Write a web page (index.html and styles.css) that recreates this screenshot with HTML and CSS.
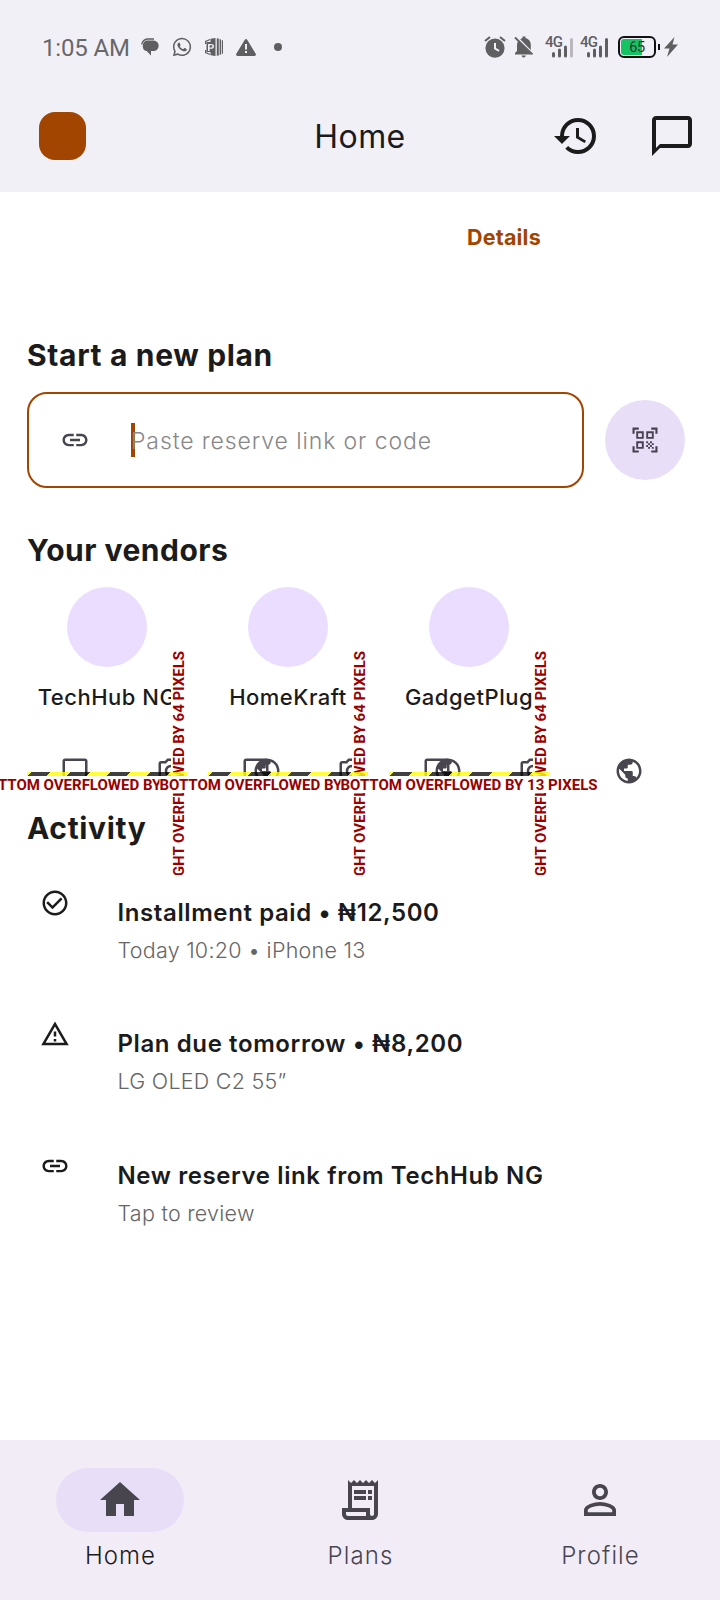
FILE: index.html
```html
<!DOCTYPE html>
<html lang="en">
<head>
<meta charset="utf-8">
<title>Home</title>
<link rel="stylesheet" href="styles.css">
</head>
<body>
<svg class="defs" width="0" height="0">
  <symbol id="link" viewBox="0 0 24 24"><path d="M3.9 12c0-1.71 1.39-3.1 3.1-3.1h4V7H7c-2.76 0-5 2.24-5 5s2.24 5 5 5h4v-1.9H7c-1.71 0-3.1-1.39-3.1-3.1zM8 13h8v-2H8v2zm9-6h-4v1.9h4c1.71 0 3.1 1.39 3.1 3.1s-1.39 3.1-3.1 3.1h-4V17h4c2.76 0 5-2.24 5-5s-2.24-5-5-5z"/></symbol>
  <symbol id="chat" viewBox="0 0 24 24"><path d="M20 2H4c-1.1 0-2 .9-2 2v18l4-4h14c1.1 0 2-.9 2-2V4c0-1.1-.9-2-2-2zm0 14H6l-2 2V4h16v12z"/></symbol>
  <symbol id="camera" viewBox="0 0 24 24"><path d="M14.12 4l1.83 2H20v12H4V6h4.05l1.83-2h4.24M15 2H9L7.17 4H4c-1.1 0-2 .9-2 2v12c0 1.1.9 2 2 2h16c1.1 0 2-.9 2-2V6c0-1.1-.9-2-2-2h-3.17L15 2zm-3 7c1.65 0 3 1.35 3 3s-1.35 3-3 3-3-1.35-3-3 1.35-3 3-3m0-2c-2.76 0-5 2.24-5 5s2.24 5 5 5 5-2.24 5-5-2.24-5-5-5z"/></symbol>
  <symbol id="globe" viewBox="0 0 24 24"><path d="M12 2C6.48 2 2 6.48 2 12s4.48 10 10 10 10-4.48 10-10S17.52 2 12 2zm-1 17.93c-3.95-.49-7-3.85-7-7.93 0-.62.08-1.21.21-1.79L9 15v1c0 1.1.9 2 2 2v1.93zm6.9-2.54c-.26-.81-1-1.39-1.9-1.39h-1v-3c0-.55-.45-1-1-1H8v-2h2c.55 0 1-.45 1-1V7h2c1.1 0 2-.9 2-2v-.41c2.93 1.19 5 4.06 5 7.41 0 2.08-.8 3.97-2.1 5.39z"/></symbol>
</svg>
<div class="screen">
  <header class="top">
    <div class="status">
      <span class="clock">1:05 AM</span>
      <svg class="s-msg" width="18" height="18" viewBox="0 0 18 18"><path d="M6.5 2.600H12.500a5.200 5.200 0 0 1 0 10.400H10v4.600L5.600 13C3 12.600 1.800 10.600 1.800 8.200 1.800 5 3.500 2.600 6.500 2.600z"/><path d="M.7 6.500Q1.800 1.300 6.500 1H13" fill="none" stroke="#5f5f61" stroke-width="1.300"/></svg>
      <svg class="s-wa" width="22" height="22" viewBox="0 0 24 24"><path d="M19.050 4.910A9.820 9.820 0 0 0 12.040 2c-5.460 0-9.910 4.450-9.910 9.910 0 1.750.460 3.450 1.320 4.950L2.050 22l5.250-1.380a9.900 9.900 0 0 0 4.740 1.210c5.460 0 9.910-4.450 9.910-9.910 0-2.650-1.030-5.140-2.900-7.010zm-7.010 15.240a8.200 8.200 0 0 1-4.190-1.150l-.3-.18-3.120.82.830-3.040-.2-.310a8.200 8.200 0 0 1-1.260-4.380c0-4.540 3.700-8.240 8.240-8.240 4.540 0 8.240 3.700 8.240 8.240s-3.700 8.240-8.240 8.240zm4.520-6.160c-.250-.120-1.470-.720-1.690-.810-.230-.080-.390-.120-.560.120-.170.250-.640.810-.780.970-.140.170-.290.190-.540.060-.250-.120-1.050-.390-1.990-1.230-.740-.660-1.230-1.470-1.380-1.720-.140-.250-.020-.380.110-.510.110-.110.250-.290.370-.430s.170-.250.250-.410c.080-.170.040-.310-.020-.430s-.560-1.340-.760-1.840c-.200-.480-.410-.420-.560-.430h-.480c-.170 0-.430.060-.660.310-.220.250-.860.850-.860 2.070s.890 2.400 1.010 2.560c.120.170 1.750 2.670 4.230 3.740 1.600.690 2.230.750 3.030.630.490-.070 1.470-.600 1.680-1.180s.210-1.070.140-1.180-.220-.160-.470-.280z"/></svg>
      <svg class="s-app" width="18" height="18" viewBox="0 0 18 18"><path d="M5.500.800L10.500 0v18l-5-.8V14H1.500V4h4zM3 6v7h1.600v-2.200h1C8 10.800 9 10 9 8.400S8 6 5.800 6zm1.600 1.300H6c1 0 1.400.3 1.400 1.100S7 9.500 6 9.500H4.600z" fill-rule="evenodd"/><path d="M5 1.500L.600 3.500V6M.600 12v2.500L5 16.500" fill="none" stroke="#5f5f61" stroke-width="1.200"/><path d="M11.800.200l2 .4v16.800l-2 .4zM14.600 1l1.400.400v15.200l-1.400.400zM16.800 2l1.200.600v12.800l-1.200.600z"/></svg>
      <svg class="s-warn" width="20" height="17" viewBox="0 0 20 17"><path d="M8.800.700q1.200-1.400 2.400 0l8.500 14q.8 2.300-1.700 2.300H2q-2.500 0-1.700-2.300zM9 5v5.500h2V5zm0 7v2h2v-2z" fill-rule="evenodd"/></svg>
      <i class="s-dot"></i>
      <span class="grow"></span>
      <svg class="s-alarm" width="22" height="22" viewBox="0 0 22 22"><path d="M11 2.500a9.600 9.600 0 1 0 0 19.200 9.600 9.600 0 0 0 0-19.200zm-1 4.500h2v5l3.500 2-1 1.800L10 13z" fill-rule="evenodd"/><path d="M1 5l5-4M21 5l-5-4" stroke="#5f5f61" stroke-width="2"/></svg>
      <svg class="s-bell" width="20" height="22" viewBox="0 0 20 22"><path d="M1 18.500v-1.600L3 15V9q0-2.500 1.300-4.200L17 17.800v.700zM6.200 3.300L8.500 2V.500h3V2C15 3 16.800 5.500 16.800 9v5zM7.500 19.500h4.400q-.4 2-2.200 2t-2.200-2z"/><path d="M1 1.500l17.500 16.800" stroke="#5f5f61" stroke-width="1.800"/></svg>
      <span class="signal"><b>4G</b><svg width="22" height="20" viewBox="0 0 22 20"><path d="M1.500 15.500v2.500M7.500 12v6M13.500 9v9"/><path class="weak" d="M19.500 1.500V18"/></svg></span>
      <span class="signal second"><b>4G</b><svg width="22" height="20" viewBox="0 0 22 20"><path d="M1.500 15.500v2.500M7.500 12v6M13.500 9v9M19.500 1.500V18"/></svg></span>
      <span class="battery"><span>65</span></span>
      <svg class="s-bolt" width="14" height="20" viewBox="0 0 14 20"><path d="M10.500 0L0 11.500h5.500L3 20 14 7.500H8.500z"/></svg>
    </div>
    <div class="appbar">
      <div class="avatar"></div>
      <h1>Home</h1>
      <div class="actions">
        <svg width="48" height="48" viewBox="0 0 24 24"><path d="M13 3a9 9 0 0 0-9 9H1l3.890 3.890.070.140L9 12H6c0-3.870 3.130-7 7-7s7 3.130 7 7-3.130 7-7 7c-1.930 0-3.680-.790-4.940-2.060l-1.420 1.420A8.954 8.954 0 0 0 13 21a9 9 0 0 0 0-18zm-1 5v5l4.280 2.540.720-1.210-3.500-2.080V8H12z"/></svg>
        <svg width="48" height="48"><use href="#chat"/></svg>
      </div>
    </div>
  </header>
  <main>
    <div class="details"><a>Details</a></div>
    <h2>Start a new plan</h2>
    <div class="search">
      <div class="field">
        <svg class="i30 muted"><use href="#link"/></svg>
        <span class="caret"></span><span class="hint">Paste reserve link or code</span>
      </div>
      <div class="scan">
        <svg class="i30" viewBox="0 0 24 24"><path d="M2 2h5v1.700H3.700V7H2zM17 2h5v5h-1.700V3.700H17zM2 17h1.700v3.300H7V22H2zM20.300 17H22v5h-5v-1.700h3.300z"/><path d="M5 5h6v6H5zm1.500 1.500v3h3v-3zM13 5h6v6h-6zm1.500 1.500v3h3v-3zM5 13h6v6H5zm1.500 1.500v3h3v-3z" fill-rule="evenodd"/><path d="M13 13h1.500v1.500H13zM16 13h1.500v1.500H16zM14.500 14.500H16V16h-1.500zM17.500 14.500H19V16h-1.500zM13 16h1.500v1.500H13zM16 16h1.500v1.500H16zM14.500 17.500H16V19h-1.500zM17.500 17.500H19V19h-1.500z"/></svg>
      </div>
    </div>
    <h2 class="h-vendors">Your vendors</h2>
    <section class="vendors">
      <article class="vendor">
        <div class="disc"></div><div class="name">TechHub NG</div>
        <div class="tools"><svg class="i30"><use href="#chat"/></svg><svg class="i30"><use href="#camera"/></svg><svg class="i30"><use href="#globe"/></svg></div>
        <div class="over-right"><span>RIGHT OVERFLOWED BY 64 PIXELS</span></div><div class="stripes"></div><div class="over-bottom">BOTTOM OVERFLOWED BY 13 PIXELS</div>
      </article>
      <article class="vendor">
        <div class="disc"></div><div class="name">HomeKraft</div>
        <div class="tools"><svg class="i30"><use href="#chat"/></svg><svg class="i30"><use href="#camera"/></svg><svg class="i30"><use href="#globe"/></svg></div>
        <div class="over-right"><span>RIGHT OVERFLOWED BY 64 PIXELS</span></div><div class="stripes"></div><div class="over-bottom">BOTTOM OVERFLOWED BY 13 PIXELS</div>
      </article>
      <article class="vendor">
        <div class="disc"></div><div class="name">GadgetPlug</div>
        <div class="tools"><svg class="i30"><use href="#chat"/></svg><svg class="i30"><use href="#camera"/></svg><svg class="i30"><use href="#globe"/></svg></div>
        <div class="over-right"><span>RIGHT OVERFLOWED BY 64 PIXELS</span></div><div class="stripes"></div><div class="over-bottom">BOTTOM OVERFLOWED BY 13 PIXELS</div>
      </article>
    </section>
    <h2 class="h-activity">Activity</h2>
    <ul class="activity">
      <li><svg class="i30" viewBox="0 0 24 24"><path d="M16.590 7.580L10 14.170l-3.590-3.580L5 12l5 5 8-8zM12 2C6.480 2 2 6.480 2 12s4.480 10 10 10 10-4.480 10-10S17.520 2 12 2zm0 18c-4.420 0-8-3.580-8-8s3.580-8 8-8 8 3.580 8 8-3.580 8-8 8z"/></svg><div><h3>Installment paid • ₦12,500</h3><p>Today 10:20 • iPhone 13</p></div></li>
      <li><svg class="i30" viewBox="0 0 24 24"><path d="M12 5.990L19.530 19H4.470L12 5.990M12 2L1 21h22L12 2zm1 14h-2v2h2v-2zm0-6h-2v4h2v-4z"/></svg><div><h3>Plan due tomorrow • ₦8,200</h3><p>LG OLED C2 55”</p></div></li>
      <li><svg class="i30"><use href="#link"/></svg><div><h3>New reserve link from TechHub NG</h3><p>Tap to review</p></div></li>
    </ul>
  </main>
  <nav class="tabs">
    <a class="tab active"><span class="pill"><svg width="48" height="48" viewBox="0 0 24 24"><path d="M10 20v-6h4v6h5v-8h3L12 3 2 12h3v8z"/></svg></span><span>Home</span></a>
    <a class="tab"><span class="pill"><svg width="48" height="48" viewBox="0 0 24 24"><path d="M19.500 3.500L18 2l-1.500 1.500L15 2l-1.500 1.500L12 2l-1.500 1.500L9 2 7.500 3.500 6 2v14H3v3c0 1.660 1.340 3 3 3h12c1.660 0 3-1.340 3-3V2l-1.500 1.500zM15 20H6c-.550 0-1-.450-1-1v-1h10v2zm4-1c0 .550-.450 1-1 1s-1-.450-1-1v-3H8V5h11v14z"/><path d="M9 7h6v2H9zM16 7h2v2h-2zM9 10h6v2H9zM16 10h2v2h-2z"/></svg></span><span>Plans</span></a>
    <a class="tab"><span class="pill"><svg width="48" height="48" viewBox="0 0 24 24"><path d="M12 5.900a2.100 2.100 0 1 1 0 4.200 2.100 2.100 0 0 1 0-4.200m0 9c2.970 0 6.100 1.460 6.100 2.100v1.100H5.900V17c0-.640 3.130-2.100 6.100-2.100M12 4C9.790 4 8 5.790 8 8s1.790 4 4 4 4-1.790 4-4-1.790-4-4-4zm0 9c-2.670 0-8 1.340-8 4v3h16v-3c0-2.660-5.330-4-8-4z"/></svg></span><span>Profile</span></a>
  </nav>
</div>
</body>
</html>
```
FILE: styles.css
```css
* { box-sizing: border-box; margin: 0; padding: 0; }
body { font-family: Inter, "Noto Sans", sans-serif; color: #1c1b1c; background: #fff; }
svg { display: block; flex: none; fill: currentColor; }
.defs { position: absolute; }
.screen { width: 720px; height: 1600px; display: flex; flex-direction: column; overflow: hidden; }
.i30 { width: 30px; height: 30px; }
.muted { color: #49454f; }

.top { height: 192px; background: #f1f0f7; }
.status { height: 94px; display: flex; align-items: center; padding: 0 42px; color: #5f5f61; font-family: Roboto, sans-serif; }
.clock { font-size: 24px; line-height: 28px; width: 99px; color: #68686b; white-space: nowrap; padding-top: 1px; letter-spacing: -.15px; }
.s-wa { margin-left: 12px; }
.s-app { margin-left: 12px; }
.s-warn { margin-left: 13px; }
.s-dot { width: 8px; height: 8px; border-radius: 50%; background: #5f5f61; margin-left: 18px; }
.grow { flex: 1; }
.s-bell { margin-left: 8px; }
.signal { display: flex; width: 29px; height: 22px; margin-left: 11px; position: relative; align-items: flex-end; justify-content: flex-end; }
.signal.second { margin-left: 6px; }
.signal b { position: absolute; left: 0; top: -1px; font-size: 15px; line-height: 15px; font-weight: 500; letter-spacing: -.8px; }
.signal svg { stroke: currentColor; stroke-width: 3; stroke-linecap: round; }
.signal .weak { stroke: #b9b6bd; }
.battery { position: relative; width: 38px; height: 22px; border: 2px solid #111; border-radius: 6px; margin-left: 9px; background: linear-gradient(90deg, #14c463 21px, #f1f0f7 21px) content-box; padding: 1px; text-align: center; font: 14.5px/17px Roboto, sans-serif; letter-spacing: -.5px; color: #333; }
.battery::after { content: ""; position: absolute; right: -6px; top: 6px; width: 2px; height: 6px; background: #111; }
.s-bolt { margin-left: 8px; }
.appbar { height: 98px; padding: 0 24px 14px; display: grid; grid-template-columns: 1fr auto 1fr; align-items: center; }
.avatar { width: 47px; height: 48px; border-radius: 16px; background: #a24500; margin-left: 15px; }
h1 { font-size: 32px; font-weight: 400; line-height: 40px; letter-spacing: .4px; padding-top: 2px; }
.actions { display: flex; gap: 48px; justify-content: flex-end; }

main { height: 1248px; padding: 0 27px; }
.details { height: 90px; padding-left: 440px; color: #a24500; font-size: 21.5px; font-weight: 700; line-height: 90px; letter-spacing: .2px; }
h2 { font-size: 30px; font-weight: 700; line-height: 40px; letter-spacing: .65px; margin-top: 53px; }
.search { display: flex; align-items: center; gap: 21px; margin-top: 17px; }
.field { width: 557px; height: 96px; border: 2px solid #a24500; border-radius: 20px; display: flex; align-items: center; padding-left: 31px; }
.caret { width: 4px; height: 34px; background: #a24500; margin-left: 41px; }
.hint { font-size: 23px; line-height: 30px; color: #888; letter-spacing: .9px; margin-left: -4px; padding-top: 2px; font-weight: 350; }
.scan { width: 80px; height: 80px; border-radius: 50%; background: #e8def8; color: #49404f; display: flex; align-items: center; justify-content: center; }
.h-vendors { margin-top: 42px; letter-spacing: .5px; }
.vendors { display: flex; gap: 21px; height: 189px; margin-top: 17px; }
.vendor { position: relative; width: 160px; height: 189px; flex: none; }
.disc { width: 80px; height: 80px; border-radius: 50%; background: #eaddff; margin: 0 auto; }
.name { font-size: 22px; font-weight: 500; line-height: 30px; letter-spacing: .5px; margin-top: 15px; text-align: center; white-space: nowrap; }
.tools { display: flex; gap: 66px; margin: 43.5px 0 0 33px; color: #49454f; }
.over-right { position: absolute; left: 143.5px; top: 62px; width: 16.5px; height: 226px; overflow: hidden; background: #fff; font: 700 15px/16px Roboto, sans-serif; color: #900; white-space: nowrap; }
.over-right span { writing-mode: vertical-rl; transform: rotate(180deg); display: block; width: 16px; line-height: 16px; margin: 2px 0 0 .5px; }
.stripes { position: absolute; left: 0; top: 185px; width: 160px; height: 4px; background: repeating-linear-gradient(135deg, rgba(255,255,0,.8) 0 2.83px, rgba(0,0,0,.75) 2.83px 16.97px, rgba(255,255,0,.8) 16.97px 28.28px); }
.over-bottom { position: absolute; left: 50%; transform: translateX(-50%); top: 189px; height: 17px; background: #fff; color: #900; font: 700 15px/18px Roboto, sans-serif; white-space: nowrap; }
.h-activity { margin-top: 32px; }
.activity { list-style: none; margin-top: 40px; }
.activity li { display: flex; gap: 48px; height: 131.4px; padding-left: 12.5px; }
.activity h3 { font-size: 24px; font-weight: 600; line-height: 30px; letter-spacing: .6px; margin-top: 10px; }
.activity p { font-size: 21.5px; line-height: 30px; color: #666; letter-spacing: .25px; margin-top: 7px; font-weight: 350; }

.tabs { height: 160px; background: #f2ecf7; display: grid; grid-template-columns: repeat(3, 1fr); color: #49454f; }
.tab { display: flex; flex-direction: column; align-items: center; padding: 28px 0 0 1px; font-size: 24px; line-height: 30px; letter-spacing: 1.1px; font-weight: 350; }
.pill { width: 128px; height: 64px; border-radius: 32px; display: flex; align-items: center; justify-content: center; margin: 0 0 9px -1px; }
.active .pill { background: #e8def8; color: #49454f; }
.active { color: #1c1b1c; }
```
